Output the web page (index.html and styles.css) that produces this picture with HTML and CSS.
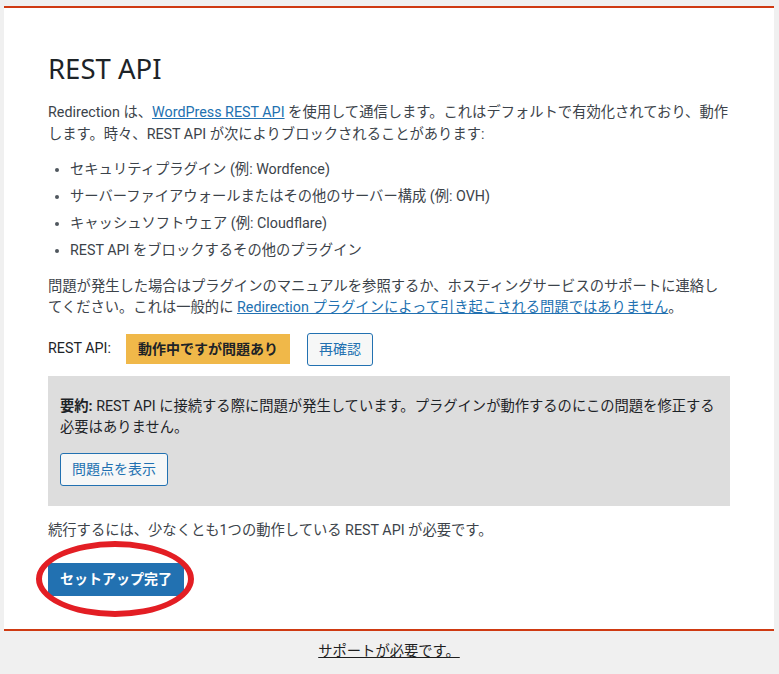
FILE: index.html
```html
<!DOCTYPE html>
<html lang="ja">
<head>
    <meta charset="UTF-8">
    <meta name="viewport" content="width=device-width, initial-scale=1.0">
    <title>Redirection - REST API</title>
    <link rel="stylesheet" href="styles.css">
</head>
<body>

    <div class="wizard">
        <h2>REST API</h2>

        <p>Redirection は、<a href="#">WordPress REST API</a> を使用して通信します。これはデフォルトで有効化されており、動作します。時々、REST API が次によりブロックされることがあります:</p>

        <ul>
            <li>セキュリティプラグイン (例: Wordfence)</li>
            <li>サーバーファイアウォールまたはその他のサーバー構成 (例: OVH)</li>
            <li>キャッシュソフトウェア (例: Cloudflare)</li>
            <li>REST API をブロックするその他のプラグイン</li>
        </ul>

        <p>問題が発生した場合はプラグインのマニュアルを参照するか、ホスティングサービスのサポートに連絡してください。これは一般的に <a href="#">Redirection プラグインによって引き起こされる問題ではありません</a>。</p>

        <!-- REST API の状態 -->
        <div class="api-status">
            <span class="api-label">REST API:</span>
            <span class="badge">動作中ですが問題あり</span>
            <button class="button">再確認</button>
        </div>

        <div class="summary">
            <p><strong>要約:</strong> REST API に接続する際に問題が発生しています。プラグインが動作するのにこの問題を修正する必要はありません。</p>
            <p><button class="button">問題点を表示</button></p>
        </div>

        <p>続行するには、少なくとも1つの動作している REST API が必要です。</p>

        <div class="actions">
            <span class="circled">
                <button class="button-primary">セットアップ完了</button>
                <span class="ring"></span>
            </span>
        </div>
    </div>

    <div class="footer">
        <a href="#">サポートが必要です。</a>
    </div>

</body>
</html>
```

FILE: styles.css
```css
body {
    margin: 0;
    padding: 6px 5px 0 4px;
    background: #f0f0f0;
    font-family: Roboto, "Noto Sans CJK JP", sans-serif;
    font-size: 14.3px;
    line-height: 21.5px;
    color: #3c434a;
}
.wizard {
    background: #fff;
    border-top: 2px solid #cf3a12;
    border-bottom: 2px solid #cf3a12;
    padding: 20px 44px 33px;
}
h2 {
    font-family: "Noto Sans", sans-serif;
    font-size: 27.5px;
    font-weight: 400;
    line-height: 36px;
    color: #1d2327;
    margin: 23px 0 15px;
}
p { margin: 14px 0; }
a { color: #2271b1; }
ul {
    margin: 14px 0;
    padding-left: 22px;
    list-style: disc;
}
li { margin-bottom: 5.5px; }
li::marker { color: #50575e; }

.api-status {
    display: flex;
    align-items: center;
    margin: 14px 0 10px;
}
.api-label { color: #1d2327; margin-right: 15px; }
.badge {
    background: #f0b849;
    color: #1d2327;
    font-size: 14px;
    font-weight: 600;
    height: 30px;
    line-height: 30px;
    padding: 0 12px;
    margin-right: 17px;
}

button {
    font-family: inherit;
    font-size: 14px;
    cursor: pointer;
    border-radius: 3px;
    line-height: 31px;
    padding: 0 11px;
    margin: 0;
}
.button {
    color: #2271b1;
    border: 1px solid #2271b1;
    background: #f6f7f7;
}
.button-primary {
    color: #fff;
    border: 1px solid #2271b1;
    background: #2271b1;
    font-weight: 600;
}

.summary {
    background: #dddddd;
    color: #1d2327;
    padding: 6px 12px;
}
.summary strong { font-weight: 700; }

.actions { margin-top: 21.5px; }
.circled {
    position: relative;
    display: inline-block;
}
.circled button { display: block; }
.ring {
    position: absolute;
    left: -12px;
    top: -22px;
    width: 158px;
    height: 76px;
    box-sizing: border-box;
    border: 6px solid #e31e24;
    border-radius: 50%;
    pointer-events: none;
}

.footer {
    text-align: center;
    padding: 10px 0;
}
.footer a { color: #1e1e1e; }
```
